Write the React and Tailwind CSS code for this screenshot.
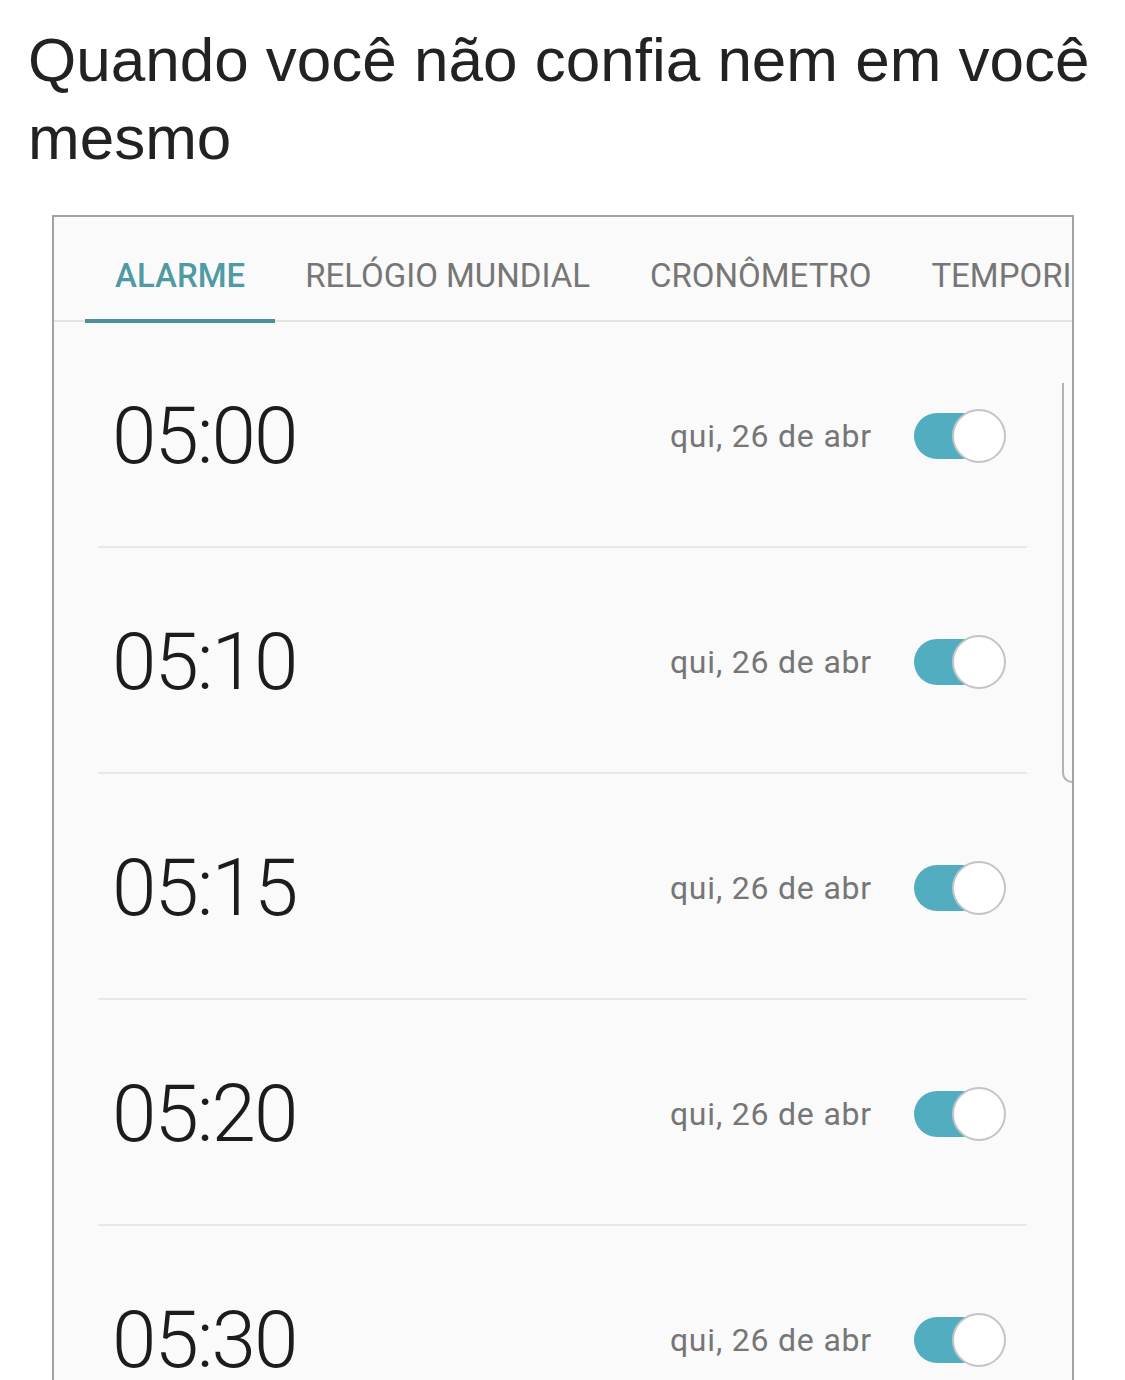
import React from 'react';

const alarms = ['05:00', '05:10', '05:15', '05:20', '05:30'];

const tabs = [
  { label: 'ALARME', active: true },
  { label: 'RELÓGIO MUNDIAL' },
  { label: 'CRONÔMETRO' },
  { label: 'TEMPORIZADOR' },
];

function Toggle() {
  return (
    <div className="relative w-[92px] h-[54px] shrink-0">
      <div className="absolute left-0 top-[4px] w-[72px] h-[46px] rounded-full bg-[#52adc1]" />
      <div className="absolute right-0 top-0 w-[54px] h-[54px] rounded-full bg-white border-2 border-[#c4c4c4]" />
    </div>
  );
}

export default function App() {
  return (
    <div className="w-[1125px] h-[1380px] overflow-hidden bg-white">
      {/* legenda do meme */}
      <div className="pl-[28px] pt-[21px] text-[62px] leading-[78px] text-[#222] font-['Liberation_Sans',Arial,sans-serif] whitespace-nowrap">
        Quando você não confia nem em você
        <br />
        mesmo
      </div>

      {/* app de relógio */}
      <div className="relative ml-[52px] mt-[38px] w-[1022px] h-[1200px] border-2 border-b-0 border-[#a3a3a3] bg-[#fafafa] font-['Roboto',sans-serif] overflow-hidden">
        <div className="flex pt-[39px] pl-[31px] border-b-2 border-[#e4e4e4] whitespace-nowrap">
          {tabs.map(t => (
            <div key={t.label} className="flex flex-col px-[30px]">
              <span className={`text-[33px] leading-[40px] ${t.active ? 'text-[#4f9ba4] font-medium' : 'text-[#767676]'}`}>
                {t.label}
              </span>
              <div className={`mt-[23px] h-[4px] -mb-[3px] -mx-[30px] ${t.active ? 'bg-[#4e9098]' : 'bg-transparent'}`} />
            </div>
          ))}
        </div>

        {alarms.map((time, i) => (
          <div key={time}>
            <div className="h-[224px] flex items-center pl-[58px] pr-[66px] pt-[4px]">
              <span className="text-[80px] font-light tracking-[-2px] text-[#1c1c1c] leading-none">{time}</span>
              <span className="ml-auto text-[32px] tracking-[0.8px] text-[#767676]">qui, 26 de abr</span>
              <div className="ml-[42px]">
                <Toggle />
              </div>
            </div>
            {i < alarms.length - 1 && <div className="ml-[44px] mr-[45px] h-[2px] bg-[#e8e8e8]" />}
          </div>
        ))}

        {/* barra de rolagem */}
        <div className="absolute right-0 top-[166px] w-[10px] h-[400px] border-l-2 border-b-2 border-[#b3b3b3] rounded-bl-[10px]" />
      </div>
    </div>
  );
}
